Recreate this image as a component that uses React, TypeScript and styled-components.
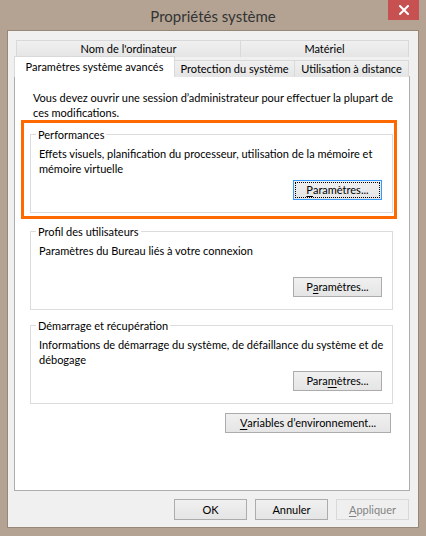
import React from "react";
import styled, { createGlobalStyle, css } from "styled-components";

const GlobalStyle = createGlobalStyle`
  html, body {
    margin: 0;
    padding: 0;
    background: #b4a393;
  }
  body {
    font-family: "Lato", "Liberation Sans", sans-serif;
    font-size: 11px;
    color: #000;
  }
`;

const Window = styled.div`
  width: 426px;
  height: 536px;
  box-sizing: border-box;
  padding: 30px 7px 8px 7px;
  background: #b4a393;
  position: relative;
`;

const TitleBar = styled.div`
  position: absolute;
  top: 0;
  left: 0;
  right: 0;
  height: 30px;
  display: flex;
  justify-content: center;
  align-items: center;
`;

const Title = styled.div`
  font-size: 15px;
  color: #333;
  padding-top: 1px;
`;

const CloseButton = styled.div`
  position: absolute;
  top: 0;
  right: 7px;
  width: 31px;
  height: 20px;
  background: #c75050;
  display: flex;
  align-items: center;
  justify-content: center;
`;

const Client = styled.div`
  box-sizing: border-box;
  height: 498px;
  border: 1px solid #968777;
  background: #f0f0f0;
  padding: 9px 8px 0 6px;
`;

const TabRow = styled.div<{ $offset?: number; $height: number }>`
  display: flex;
  align-items: flex-end;
  height: ${(p) => p.$height}px;
  margin-left: ${(p) => p.$offset ?? 0}px;
`;

const Tab = styled.div<{ $width: number; $first?: boolean; $active?: boolean; $height: number }>`
  box-sizing: border-box;
  width: ${(p) => p.$width}px;
  height: ${(p) => p.$height}px;
  border: 1px solid #d9d9d9;
  border-bottom: none;
  border-left: ${(p) => (p.$first ? "1px solid #d9d9d9" : "none")};
  background: linear-gradient(#f0f0f0, #e5e5e5);
  display: flex;
  align-items: center;
  justify-content: center;
  white-space: nowrap;
  padding-bottom: 1px;
  ${(p) =>
    p.$active &&
    css`
      position: relative;
      z-index: 1;
      background: #fff;
      padding-bottom: 2px;
    `}
`;

const Panel = styled.div`
  box-sizing: border-box;
  width: 396px;
  height: 415px;
  margin-top: -1px;
  border: 1px solid #adadad;
  border-top-color: #d9d9d9;
  background: #fff;
  padding: 13px 16px 0 0;
  line-height: 15px;
`;

const Intro = styled.p`
  margin: 0 0 0 18px;
  height: 30px;
  width: 372px;
`;

const Highlight = styled.div`
  width: 376px;
  box-sizing: border-box;
  margin-left: 6px;
  border: 3px solid #ff6a00;
  padding: 4px 1px 3px 6px;
`;

const Group = styled.fieldset<{ $gap?: number }>`
  box-sizing: border-box;
  width: 363px;
  margin: ${(p) => p.$gap ?? 0}px 0 0 ${(p) => (p.$gap ? 15 : 0)}px;
  padding: 0;
  min-inline-size: 0;
  border: 1px solid #dcdcdc;
`;

const Legend = styled.legend`
  margin-left: 5px;
  padding: 0 2px;
  line-height: 15px;
`;

const GroupBody = styled.div`
  padding: 4px 0 12px 8px;
`;

const GroupText = styled.div`
  height: 30px;
`;

const ButtonRow = styled.div<{ $top?: number; $right?: number }>`
  display: flex;
  justify-content: flex-end;
  gap: 8px;
  margin-top: ${(p) => p.$top ?? 4}px;
  padding-right: ${(p) => p.$right ?? 0}px;
`;

const Button = styled.div<{ $width: number; $height?: number; $focused?: boolean; $disabled?: boolean }>`
  box-sizing: border-box;
  width: ${(p) => p.$width}px;
  height: ${(p) => p.$height ?? 20}px;
  border: 1px solid #acacac;
  background: linear-gradient(#f0f0f0, #e5e5e5);
  display: flex;
  align-items: center;
  justify-content: center;
  white-space: nowrap;
  padding-bottom: 1px;
  position: relative;
  ${(p) =>
    p.$focused &&
    css`
      border-color: #3399ff;
      &::after {
        content: "";
        position: absolute;
        inset: 1px;
        border: 1px dotted #000;
      }
    `}
  ${(p) =>
    p.$disabled &&
    css`
      border-color: #d9d9d9;
      background: #efefef;
      color: #838383;
    `}
`;

const Key = styled.span`
  text-decoration: underline;
  text-underline-offset: 2px;
`;

const Footer = styled.div`
  display: flex;
  justify-content: flex-end;
  gap: 8px;
  margin-top: 8px;
  padding-right: 1px;
`;

const CloseIcon = () => (
  <svg width="10" height="10" viewBox="0 0 10 10">
    <path d="M1 1 L9 9 M9 1 L1 9" stroke="#fff" strokeWidth="2" strokeLinecap="square" />
  </svg>
);

const Settings = ({ at, focused }: { at: number; focused?: boolean }) => {
  const label = "Paramètres...";
  return (
    <ButtonRow $right={10}>
      <Button $width={89} $focused={focused}>
        {label.slice(0, at)}
        <Key>{label[at]}</Key>
        {label.slice(at + 1)}
      </Button>
    </ButtonRow>
  );
};

const App = () => {
  return (
    <>
      <GlobalStyle />
      <Window>
        <TitleBar>
          <Title>Propriétés système</Title>
          <CloseButton>
            <CloseIcon />
          </CloseButton>
        </TitleBar>
        <Client>
          <TabRow $offset={2} $height={17}>
            <Tab $width={225} $height={17} $first>
              Nom de l'ordinateur
            </Tab>
            <Tab $width={168} $height={17}>
              Matériel
            </Tab>
          </TabRow>
          <TabRow $height={20}>
            <Tab $width={161} $height={21} $first $active>
              Paramètres système avancés
            </Tab>
            <Tab $width={120} $height={17}>
              Protection du système
            </Tab>
            <Tab $width={114} $height={17}>
              Utilisation à distance
            </Tab>
          </TabRow>
          <Panel>
            <Intro>
              Vous devez ouvrir une session d’administrateur pour effectuer la plupart de ces modifications.
            </Intro>
            <Highlight>
              <Group>
                <Legend>Performances</Legend>
                <GroupBody>
                  <GroupText>
                    Effets visuels, planification du processeur, utilisation de la mémoire et mémoire virtuelle
                  </GroupText>
                  <Settings at={0} focused />
                </GroupBody>
              </Group>
            </Highlight>
            <Group $gap={5}>
              <Legend>Profil des utilisateurs</Legend>
              <GroupBody>
                <GroupText>Paramètres du Bureau liés à votre connexion</GroupText>
                <Settings at={1} />
              </GroupBody>
            </Group>
            <Group $gap={8}>
              <Legend>Démarrage et récupération</Legend>
              <GroupBody>
                <GroupText>
                  Informations de démarrage du système, de défaillance du système et de débogage
                </GroupText>
                <Settings at={4} />
              </GroupBody>
            </Group>
            <ButtonRow $top={9} $right={2}>
              <Button $width={166}>
                <Key>V</Key>ariables d’environnement...
              </Button>
            </ButtonRow>
          </Panel>
          <Footer>
            <Button $width={73} $height={21}>
              OK
            </Button>
            <Button $width={73} $height={21}>
              Annuler
            </Button>
            <Button $width={73} $height={21} $disabled>
              <Key>A</Key>ppliquer
            </Button>
          </Footer>
        </Client>
      </Window>
    </>
  );
};

export default App;
